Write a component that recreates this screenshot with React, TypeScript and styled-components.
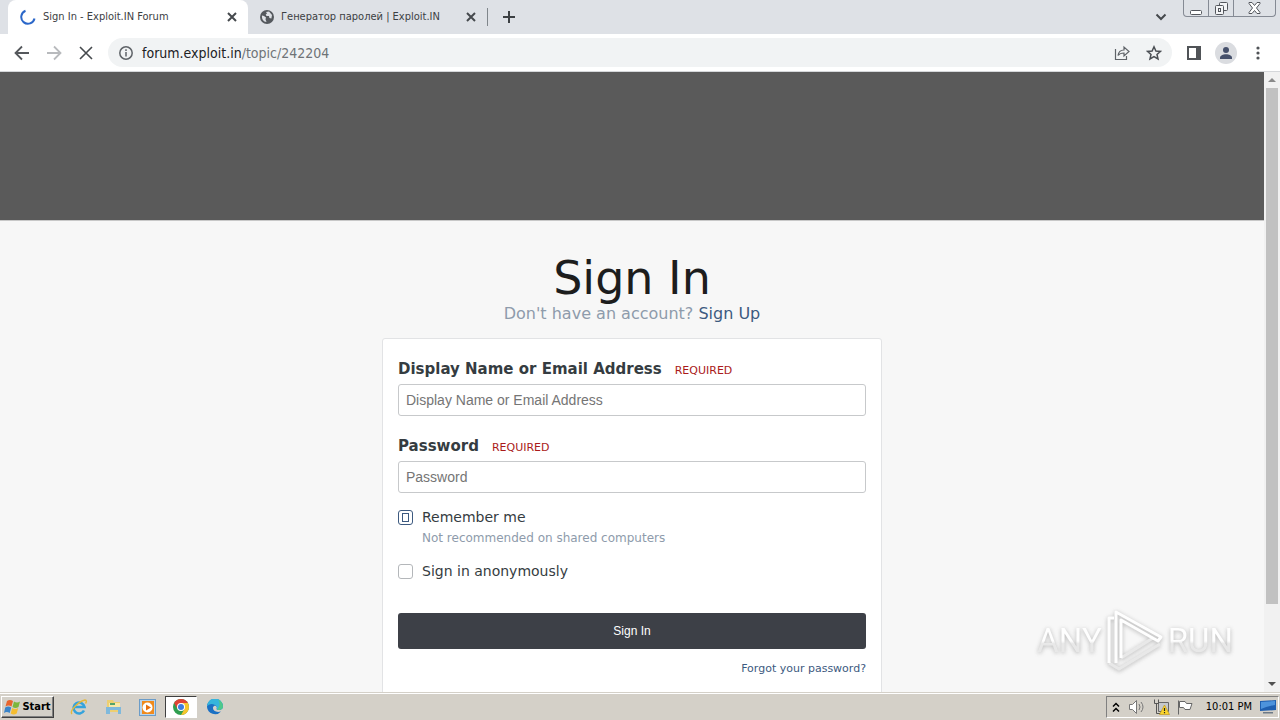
import React from "react";
import styled, { createGlobalStyle, keyframes } from "styled-components";

const ui = `"DejaVu Sans Condensed", "DejaVu Sans", sans-serif`;
const body = `Verdana, "DejaVu Sans", sans-serif`;

const GlobalStyle = createGlobalStyle`
  *, *::before, *::after { box-sizing: border-box; }
  body { margin: 0; font-family: ${body}; overflow: hidden; }
  h1, p { margin: 0; font-weight: 400; }
  button { font: inherit; padding: 0; border: 0; background: none; color: inherit; cursor: pointer; }
  a { text-decoration: none; }
  svg { display: block; flex: none; }
`;

const Screen = styled.div`
  display: flex;
  flex-direction: column;
  height: 100vh;
  overflow: hidden;
`;

/* Tab strip */
const TabStrip = styled.header`
  display: flex;
  height: 34px;
  flex: none;
  padding-left: 8px;
  background: #dee1e6;
  font: 11px/16px ${ui};
  color: #3c4043;
`;
const Tab = styled.div<{ $active?: boolean }>`
  display: flex;
  align-items: center;
  width: 240px;
  padding: 0 10px 0 12px;
  background: ${(p) => (p.$active ? "#fff" : "transparent")};
  border-radius: 8px 8px 0 0;
`;
const TabTitle = styled.span`
  flex: 1;
  padding-left: 7px;
  white-space: nowrap;
  overflow: hidden;
`;
const IconButton = styled.button<{ $w?: number }>`
  display: flex;
  align-items: center;
  justify-content: center;
  width: ${(p) => p.$w ?? 32}px;
  height: 100%;
`;
const TabDivider = styled.span`
  width: 1px;
  height: 18px;
  margin: 8px 5px 0 -1px;
  background: #80868b;
`;
const Grow = styled.div`
  flex: 1;
`;
const WindowButtons = styled.div`
  display: flex;
  height: 17px;
  margin: 0 4px 0 6px;
  border: 1px solid #858a94;
  border-top: 0;
  border-radius: 0 0 4px 4px;
  button + button { border-left: 1px solid #858a94; }
`;

/* Toolbar */
const Toolbar = styled.nav`
  display: flex;
  align-items: center;
  height: 38px;
  flex: none;
  padding: 0 6px;
  background: #fff;
  border-bottom: 1px solid #d5d7da;
`;
const AddressBar = styled.div`
  display: flex;
  align-items: center;
  flex: 1;
  height: 29px;
  margin: 0 6px;
  padding: 0 2px 0 10px;
  background: #f1f3f4;
  border-radius: 15px;
`;
const Address = styled.a`
  flex: 1;
  padding-left: 8px;
  font: 14px/20px ${ui};
  color: #6f7377;
  b { font-weight: 400; color: #202124; }
`;

/* Page */
const Viewport = styled.div`
  display: flex;
  flex: 1;
  min-height: 0;
`;
const Page = styled.main`
  flex: 1;
  overflow: hidden;
  background: #f7f7f7;
`;
const Banner = styled.div`
  height: 149px;
  background: #5a5a5a;
  border-bottom: 1px solid #c8c8c8;
`;
const Heading = styled.div`
  padding-top: 32px;
  text-align: center;
`;
const Title = styled.h1`
  font-size: 46px;
  line-height: 50px;
  color: #1d1d1d;
`;
const Subtitle = styled.p`
  font-size: 16px;
  line-height: 22px;
  color: #8e9bab;
`;
const Link = styled.a`
  color: #3d5a80;
`;
const Card = styled.form`
  width: 500px;
  max-width: 100%;
  margin: 13px auto 0;
  padding: 15px 15px 40px;
  background: #fff;
  border: 1px solid #e2e3e5;
  border-radius: 3px;
`;
const Field = styled.div`
  margin-bottom: 15px;
`;
const LabelRow = styled.div`
  display: flex;
  align-items: baseline;
  gap: 13px;
  height: 30px;
  line-height: 30px;
`;
const Label = styled.label`
  font-size: 15px;
  font-weight: 700;
  color: #353c41;
`;
const Required = styled.span`
  font-size: 11px;
  color: #aa1a1a;
`;
const TextInput = styled.input`
  display: block;
  width: 100%;
  height: 32px;
  padding: 0 7px;
  font: 14px/20px "Liberation Sans", Arial, sans-serif;
  background: #fff;
  border: 1px solid #c7c9cb;
  border-radius: 3px;
  &::placeholder { color: #757575; opacity: 1; }
`;
const CheckRow = styled.div`
  display: grid;
  grid-template-columns: 15px 1fr;
  column-gap: 9px;
  align-items: center;
  margin-bottom: 12px;
`;
const Checkbox = styled.input`
  display: flex;
  align-items: center;
  justify-content: center;
  width: 15px;
  height: 15px;
  margin: 0;
  appearance: none;
  background: #fff;
  border: 1px solid #b4b7ba;
  border-radius: 3px;
  &:checked { border-color: #3d5a80; }
  &:checked::after {
    content: "";
    width: 7px;
    height: 9px;
    border: 1px solid #3d5a80;
  }
`;
const CheckLabel = styled.label`
  font-size: 14px;
  line-height: 18px;
  color: #353c41;
`;
const Hint = styled.span`
  grid-column: 2;
  font-size: 12px;
  line-height: 24px;
  color: #8e9bab;
`;
const Submit = styled.button`
  display: block;
  width: 100%;
  height: 36px;
  margin: 33px 0 12px;
  font: 12px/18px "Liberation Sans", Arial, sans-serif;
  color: #fff;
  background: #3d4047;
  border-radius: 3px;
`;
const Forgot = styled.p`
  font-size: 11px;
  line-height: 16px;
  text-align: right;
`;

/* Scroll bar */
const ScrollBar = styled.div`
  display: flex;
  flex-direction: column;
  width: 16px;
  padding: 0 2px;
  background: #f1f1f1;
`;
const ScrollThumb = styled.div`
  flex: 516;
  background: #c1c1c1;
`;
const ScrollRest = styled.div`
  flex: 72;
`;
const ScrollArrow = styled.button`
  display: flex;
  align-items: center;
  justify-content: center;
  height: 16px;
  flex: none;
`;

/* Watermark laid over the page */
const Watermark = styled.div`
  position: fixed;
  right: 47px;
  bottom: 46px;
  display: flex;
  align-items: center;
  gap: 4px;
  font: 400 33px/66px Roboto, sans-serif;
  color: #fff;
  filter: drop-shadow(0 1px 2px #a8a8a8);
  opacity: 0.85;
  pointer-events: none;
`;
const WatermarkText = styled.span`
  color: transparent;
  background: linear-gradient(#fff 50%, #e6e6e6 54%);
  background-clip: text;
`;

/* Taskbar */
const Taskbar = styled.footer`
  display: flex;
  align-items: center;
  height: 28px;
  flex: none;
  padding: 1px 1px 0;
  background: #d4d0c8;
  border-top: 1px solid #d4d0c8;
  box-shadow: inset 0 1px #fff;
  font: 11px/16px ${ui};
  color: #000;
`;
const StartButton = styled.button`
  display: flex;
  align-items: center;
  justify-content: center;
  gap: 1px;
  width: 53px;
  height: 22px;
  margin-right: 9px;
  font-weight: 700;
  border: 1px solid;
  border-color: #fff #404040 #404040 #fff;
  box-shadow: inset -1px -1px #808080;
`;
const TaskButton = styled.button<{ $active?: boolean }>`
  display: flex;
  align-items: center;
  justify-content: center;
  width: 32px;
  height: 22px;
  margin-right: 2px;
  border: 1px solid;
  border-color: ${(p) => (p.$active ? "#404040 #fff #fff #404040" : "transparent")};
  background: ${(p) => (p.$active ? "#fff" : "transparent")};
`;
const Tray = styled.div`
  display: flex;
  align-items: center;
  height: 22px;
  padding: 0 2px 0 5px;
  border: 1px solid;
  border-color: #808080 #fff #fff #808080;
`;
const Clock = styled.time`
  padding: 0 8px 0 5px;
  white-space: nowrap;
`;

const spin = keyframes`to { transform: rotate(360deg); }`;
const Spinner = styled.svg`
  animation: ${spin} 1s linear infinite paused;
`;

const Cross = ({ reach, width = 2 }: { reach: number; width?: number }) => (
  <svg width="16" height="16" viewBox="-8 -8 16 16" stroke="#45494d" strokeWidth={width}>
    <path d={`M${-reach} ${-reach}L${reach} ${reach}M${reach} ${-reach}L${-reach} ${reach}`} />
  </svg>
);

const Arrow = ({ color, flip }: { color: string; flip?: boolean }) => (
  <svg width="16" height="16" viewBox="0 0 16 16" fill="none" stroke={color} strokeWidth="1.800">
    <path d={flip ? "M1 8h13M8 1.500l6.500 6.500L8 14.500" : "M15 8H2M8 1.500L1.500 8 8 14.500"} />
  </svg>
);

function Chrome() {
  return (
    <>
      <TabStrip>
        <Tab $active>
          <Spinner width="16" height="16" viewBox="0 0 16 16" fill="none" stroke="#2b67c9" strokeWidth="2">
            <path d="M5.500 1.800A6.700 6.700 0 1 0 14.500 9.500" />
          </Spinner>
          <TabTitle>Sign In - Exploit.IN Forum</TabTitle>
          <IconButton $w={12} aria-label="Close tab"><Cross reach={4} /></IconButton>
        </Tab>
        <Tab>
          <svg width="14" height="14" viewBox="0 0 14 14">
            <circle cx="7" cy="7" r="7" fill="#55595e" />
            <path d="M2 5.500l2 .5 2 1.500-.5 1.800 1 2.700C3.500 12 1.500 9 2 5.500zM6 2l3-.4L12 5l-.6 3.500-2-.5-.4-2H6.500l-.8-1.500L7 3.500z" fill="#dee1e6" />
          </svg>
          <TabTitle>Генератор паролей | Exploit.IN</TabTitle>
          <IconButton $w={14} aria-label="Close tab"><Cross reach={4} /></IconButton>
        </Tab>
        <TabDivider />
        <IconButton aria-label="New tab">
          <svg width="12" height="12" viewBox="0 0 12 12" stroke="#3c4043" strokeWidth="2"><path d="M6 0v12M0 6h12" /></svg>
        </IconButton>
        <Grow />
        <IconButton aria-label="Search tabs">
          <svg width="12" height="8" viewBox="0 0 12 8" fill="none" stroke="#45494d" strokeWidth="2"><path d="M1.500 1.500L6 6l4.500-4.500" /></svg>
        </IconButton>
        <WindowButtons>
          <IconButton $w={24} aria-label="Minimize">
            <svg width="12" height="13" viewBox="0 0 12 13" fill="#fff" stroke="#53565c"><rect x=".5" y="8.500" width="11" height="4" rx="1" /></svg>
          </IconButton>
          <IconButton $w={25} aria-label="Restore">
            <svg width="13" height="13" viewBox="0 0 13 13" fill="#f3f4f6" stroke="#53565c">
              <rect x="4.500" y=".5" width="8" height="8" rx="1" /><rect x=".5" y="3.500" width="8" height="9" rx="1" /><rect x="3.500" y="6.500" width="2" height="3" />
            </svg>
          </IconButton>
          <IconButton $w={42} aria-label="Close">
            <svg width="13" height="12" viewBox="0 0 13 12" fill="#fff" stroke="#53565c">
              <path d="M1 .5h3l2.500 3L9 .5h3v1L8.500 6l3.500 4.500v1H9l-2.500-3-2.500 3H1v-1L4.500 6 1 1.500z" />
            </svg>
          </IconButton>
        </WindowButtons>
      </TabStrip>
      <Toolbar>
        <IconButton aria-label="Back"><Arrow color="#55585c" /></IconButton>
        <IconButton aria-label="Forward"><Arrow color="#b8babd" flip /></IconButton>
        <IconButton aria-label="Stop"><Cross reach={6} width={1.6} /></IconButton>
        <AddressBar>
          <svg width="16" height="16" viewBox="0 0 16 16" fill="none" stroke="#5f6368" strokeWidth="1.500">
            <circle cx="8" cy="8" r="6.200" /><path d="M8 7v4.500M8 4.300v1.700" />
          </svg>
          <Address href="#"><b>forum.exploit.in</b>/topic/242204</Address>
          <IconButton aria-label="Share">
            <svg width="16" height="16" viewBox="0 0 16 16" fill="none" stroke="#5f6368" strokeWidth="1.200">
              <path d="M1.500 4v10.500h11V11M4 10.500C4.500 7 7 5 10 5V2l5 4.500L10 11V8C7.500 8 5.500 8.500 4 10.500z" />
            </svg>
          </IconButton>
          <IconButton aria-label="Bookmark">
            <svg width="16" height="16" viewBox="0 0 16 16" fill="none" stroke="#4b4f54" strokeWidth="1.500">
              <path d="M8 1.800l1.900 4.200 4.500.4-3.400 3 1 4.500L8 11.500l-4 2.400 1-4.500-3.400-3 4.500-.4z" />
            </svg>
          </IconButton>
        </AddressBar>
        <IconButton aria-label="Side panel">
          <svg width="14" height="14" viewBox="0 0 14 14"><path d="M0 0h14v14H0zM2 2v10h7V2z" fill="#505357" fillRule="evenodd" /></svg>
        </IconButton>
        <IconButton aria-label="Profile">
          <svg width="22" height="22" viewBox="0 0 22 22">
            <circle cx="11" cy="11" r="11" fill="#dadce0" /><circle cx="11" cy="8" r="3" fill="#45506b" /><path d="M5 16c0-5 12-5 12 0v1H5z" fill="#45506b" />
          </svg>
        </IconButton>
        <IconButton aria-label="Menu">
          <svg width="4" height="14" viewBox="0 0 4 14" fill="#505357"><circle cx="2" cy="2" r="1.600" /><circle cx="2" cy="7" r="1.600" /><circle cx="2" cy="12" r="1.600" /></svg>
        </IconButton>
      </Toolbar>
    </>
  );
}

function SignInPage() {
  return (
    <Page>
      <Banner />
      <Heading>
        <Title>Sign In</Title>
        <Subtitle>Don't have an account? <Link href="#">Sign Up</Link></Subtitle>
      </Heading>
      <Card onSubmit={(e) => e.preventDefault()}>
        <Field>
          <LabelRow><Label htmlFor="name">Display Name or Email Address</Label><Required>REQUIRED</Required></LabelRow>
          <TextInput id="name" placeholder="Display Name or Email Address" />
        </Field>
        <Field>
          <LabelRow><Label htmlFor="password">Password</Label><Required>REQUIRED</Required></LabelRow>
          <TextInput id="password" type="password" placeholder="Password" />
        </Field>
        <CheckRow>
          <Checkbox id="remember" type="checkbox" defaultChecked />
          <CheckLabel htmlFor="remember">Remember me</CheckLabel>
          <Hint>Not recommended on shared computers</Hint>
        </CheckRow>
        <CheckRow>
          <Checkbox id="anonymous" type="checkbox" />
          <CheckLabel htmlFor="anonymous">Sign in anonymously</CheckLabel>
        </CheckRow>
        <Submit type="submit">Sign In</Submit>
        <Forgot><Link href="#">Forgot your password?</Link></Forgot>
      </Card>
    </Page>
  );
}

function DesktopBar() {
  return (
    <Taskbar>
      <StartButton>
        <svg width="17" height="16" viewBox="0 0 17 16">
          <path d="M3 2c2-1.500 4-1.300 6 0L7.500 7.500C5.500 6.300 3.500 6.300 1.500 7.500z" fill="#e8642c" />
          <path d="M10 2.500c2 1.200 4 1.200 6 0L14.500 8c-2 1.200-4 1.200-6 0z" fill="#7cb63c" />
          <path d="M1.200 8.500c2-1.200 4-1.200 6 0L5.700 14c-2-1.200-4-1.200-5.700 0z" fill="#3a84c9" />
          <path d="M8.200 9c2 1.200 4 1.200 6 0l-1.500 5.500c-2 1.200-4 1.200-6 0z" fill="#f5bd30" />
        </svg>
        Start
      </StartButton>
      <TaskButton aria-label="Internet Explorer">
        <svg width="18" height="18" viewBox="0 0 18 18" fill="none">
          <path d="M14 12.500A5.500 5.500 0 1 1 14.500 9H5" stroke="#35a3dc" strokeWidth="2.600" />
          <path d="M2 16C-1 13 9 3 15 2c2 0 1.500 2 .5 3.500" stroke="#e5b83a" strokeWidth="1.400" />
        </svg>
      </TaskButton>
      <TaskButton aria-label="File Explorer">
        <svg width="17" height="16" viewBox="0 0 17 16">
          <path d="M2 1h6l1 2h6v10H2z" fill="#edcf72" /><path d="M4 4h11v7H4z" fill="#f8e9a8" /><path d="M5 4h5v2H5z" fill="#54a46a" />
          <path d="M1 8h15v7h-3v-4H5v4H1z" fill="#7fb9dc" />
        </svg>
      </TaskButton>
      <TaskButton aria-label="Media Player">
        <svg width="17" height="17" viewBox="0 0 17 17">
          <rect x=".5" y=".5" width="16" height="16" fill="#b9d4ec" stroke="#6b9cc8" /><rect x="3" y="2" width="12" height="13" fill="#f08a1c" />
          <circle cx="8.500" cy="8.500" r="5" fill="#fff" /><path d="M7 5.500l5 3-5 3z" fill="#e8700f" />
        </svg>
      </TaskButton>
      <TaskButton $active aria-label="Chrome">
        <svg width="16" height="16" viewBox="0 0 16 16">
          <circle cx="8" cy="8" r="8" fill="#2f9e4f" />
          <path d="M8 8V4h6.900A8 8 0 0 1 8 16l3.500-6z" fill="#f7c52c" />
          <path d="M1.100 4A8 8 0 0 1 14.900 4H8L4.500 10z" fill="#e04335" />
          <circle cx="8" cy="8" r="4" fill="#fff" /><circle cx="8" cy="8" r="3" fill="#3c7de0" />
        </svg>
      </TaskButton>
      <TaskButton aria-label="Edge">
        <svg width="16" height="16" viewBox="0 0 16 16">
          <path d="M0 8A8 8 0 0 1 16 7.500C16 10.500 12.500 11.500 10 10.500C9 10 10.500 9 9.500 7.500C8.500 6 6.500 6.500 6 8.500C5.500 11.500 9 14 14 12.500A8 8 0 0 1 0 8z" fill="#1a70c4" />
          <path d="M0 7.500A8 8 0 0 1 16 7.500C16 10.500 12.500 11.500 10 10.500C9 10 10.500 9 9.500 7.500C7.500 4 2 4 0 7.500z" fill="#35b5dc" />
          <path d="M11 .6A8 8 0 0 1 16 7.500C16 10.500 12.500 11.500 10 10.500C13 8 13.500 4 11 .6z" fill="#4fc88a" />
        </svg>
      </TaskButton>
      <Grow />
      <Tray>
        <svg width="8" height="11" viewBox="0 0 8 11" fill="none" stroke="#000" strokeWidth="1.500"><path d="M1 4.500l3-3 3 3M1 9.500l3-3 3 3" /></svg>
        <IconButton $w={34} aria-label="Volume">
          <svg width="16" height="16" viewBox="0 0 16 16" fill="#fff" stroke="#777">
            <path d="M.5 5.500h3l4-4v13l-4-4h-3z" /><path d="M10 5q2 3 0 6M12 3q4 5 0 10" fill="none" />
          </svg>
        </IconButton>
        <IconButton $w={16} aria-label="Network">
          <svg width="17" height="16" viewBox="0 0 17 16">
            <path d="M5.500 3.500h10v9h-10z" fill="#c5c8cb" stroke="#666" /><path d="M1.500.5v4h4v-4M3.500 4.500v10h4" fill="none" stroke="#555" />
            <path d="M11.500 6l5 9.500h-10z" fill="#fbd52c" stroke="#b98d11" strokeWidth=".6" /><path d="M11.500 9v3M11.500 13v1.300" stroke="#222" strokeWidth="1.200" />
          </svg>
        </IconButton>
        <IconButton $w={31} aria-label="Action Center">
          <svg width="16" height="15" viewBox="0 0 16 15" fill="#fff" stroke="#666"><path d="M1.500.5v14M2.500 1.500h5.500l1.500 2h5.500l-2 6H8l-1.500-2h-4z" /></svg>
        </IconButton>
        <Clock>10:01 PM</Clock>
        <svg width="16" height="14" viewBox="0 0 16 14"><path d="M0 1l16-1v10L0 11z" fill="#1f5fb0" /><path d="M1 2l14-1v4Q7 6 1 9z" fill="#4d93dc" /><path d="M3 12h10v1.500H3z" fill="#6d7a88" /></svg>
      </Tray>
    </Taskbar>
  );
}

export default function App() {
  return (
    <Screen>
      <GlobalStyle />
      <Chrome />
      <Viewport>
        <SignInPage />
        <ScrollBar>
          <ScrollArrow aria-label="Scroll up"><svg width="8" height="4" viewBox="0 0 8 4"><path d="M0 4l4-4 4 4z" fill="#8a8a8a" /></svg></ScrollArrow>
          <ScrollThumb />
          <ScrollRest />
          <ScrollArrow aria-label="Scroll down"><svg width="8" height="4" viewBox="0 0 8 4"><path d="M0 0l4 4 4-4z" fill="#505050" /></svg></ScrollArrow>
        </ScrollBar>
      </Viewport>
      <DesktopBar />
      <Watermark>
        <WatermarkText>ANY</WatermarkText>
        <svg width="58" height="64" viewBox="0 0 58 64" fill="none" stroke="#fff" strokeWidth="3" strokeLinejoin="round">
          <path d="M3 54l10 6 41-25M15 49L47 29" stroke="#e6e6e6" />
          <path d="M10 54V3L55 28l-3 4L15 11v38M8 9H3v45" />
        </svg>
        <WatermarkText>RUN</WatermarkText>
      </Watermark>
    </Screen>
  );
}
